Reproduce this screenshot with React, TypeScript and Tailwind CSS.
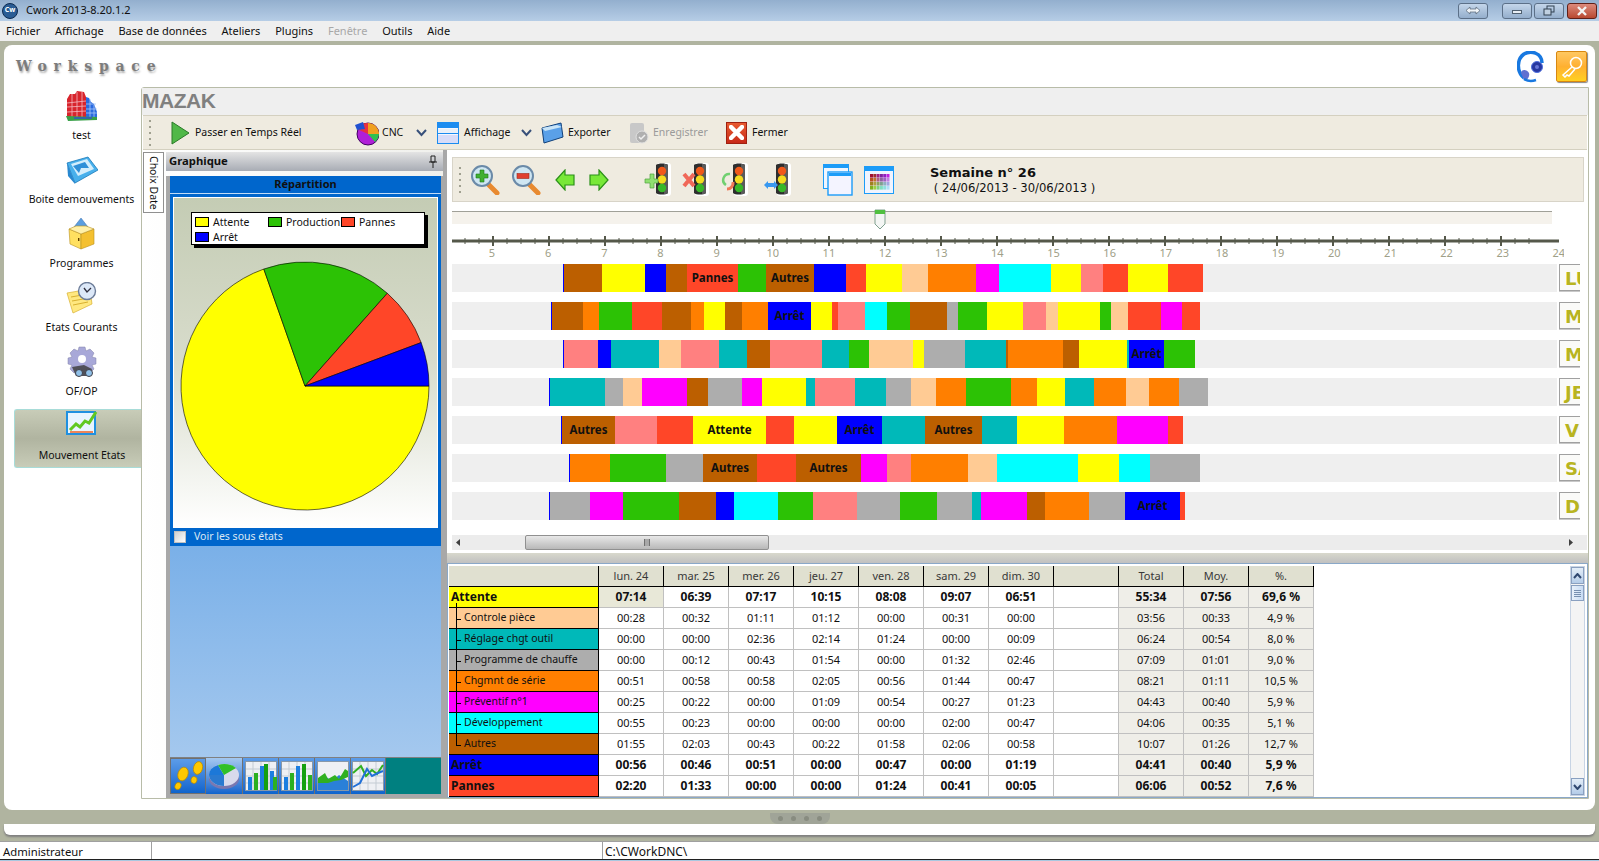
import React from "react";

const C: Record<string, string> = {
  y: "#ffff00", g: "#2cc205", r: "#ff4628", b: "#0000ff", w: "#bc5f00", p: "#ffcb94",
  t: "#00b9b9", a: "#adadad", o: "#ff7f00", m: "#ff00ff", c: "#00ffff", k: "#ff8080",
};

type Seg = [number, string, string?];
const ROWS: { start: number; label: string; segs: Seg[] }[] = [
  { start: 563, label: "LUNDI", segs: [[602, "w"], [645, "y"], [666, "b"], [687, "w"], [738, "r", "Pannes"], [766, "g"], [814, "w", "Autres"], [846, "b"], [866, "r"], [902, "y"], [928, "p"], [976, "o"], [999, "m"], [1051, "c"], [1081, "y"], [1103, "k"], [1128, "r"], [1168, "y"], [1203, "r"]] },
  { start: 551, label: "MARDI", segs: [[583, "w"], [599, "o"], [632, "g"], [662, "r"], [691, "w"], [704, "o"], [725, "y"], [742, "w"], [768, "o"], [811, "b", "Arrêt"], [832, "y"], [838, "r"], [865, "k"], [887, "c"], [910, "g"], [947, "w"], [958, "a"], [987, "g"], [1023, "y"], [1046, "k"], [1058, "p"], [1100, "y"], [1111, "g"], [1128, "p"], [1161, "r"], [1182, "m"], [1200, "r"]] },
  { start: 563, label: "MERCREDI", segs: [[598, "k"], [611, "b"], [659, "t"], [681, "p"], [719, "k"], [747, "t"], [770, "w"], [822, "k"], [849, "t"], [869, "g"], [913, "p"], [924, "y"], [965, "a"], [1006, "t"], [1008, "w"], [1063, "o"], [1079, "w"], [1127, "y"], [1129, "t"], [1164, "b", "Arrêt"], [1195, "g"]] },
  { start: 549, label: "JEUDI", segs: [[605, "t"], [623, "a"], [642, "p"], [687, "m"], [708, "w"], [742, "a"], [762, "m"], [806, "y"], [815, "t"], [855, "k"], [886, "t"], [911, "a"], [936, "p"], [966, "o"], [1011, "g"], [1037, "o"], [1065, "y"], [1094, "t"], [1126, "o"], [1149, "p"], [1179, "o"], [1208, "a"]] },
  { start: 561, label: "VENDREDI", segs: [[615, "w", "Autres"], [657, "k"], [693, "r"], [766, "y", "Attente"], [794, "r"], [837, "y"], [882, "b", "Arrêt"], [925, "t"], [982, "w", "Autres"], [1017, "t"], [1064, "y"], [1117, "o"], [1168, "m"], [1183, "r"]] },
  { start: 569, label: "SAMEDI", segs: [[610, "o"], [666, "g"], [703, "a"], [757, "w", "Autres"], [796, "r"], [861, "w", "Autres"], [887, "m"], [911, "k"], [968, "o"], [997, "p"], [1078, "c"], [1119, "y"], [1150, "c"], [1200, "a"]] },
  { start: 549, label: "DIMANCHE", segs: [[590, "a"], [623, "m"], [679, "g"], [716, "w"], [734, "b"], [778, "c"], [813, "g"], [857, "k"], [900, "a"], [937, "g"], [972, "a"], [981, "t"], [1027, "m"], [1045, "w"], [1089, "o"], [1125, "a"], [1180, "b", "Arrêt"], [1185, "r"]] },
];

const HEAD = ["lun. 24", "mar. 25", "mer. 26", "jeu. 27", "ven. 28", "sam. 29", "dim. 30", "", "Total", "Moy.", "%."];
const TABLE: { name: string; color: string; bold?: boolean; v: string[] }[] = [
  { name: "Attente", color: "y", bold: true, v: ["07:14", "06:39", "07:17", "10:15", "08:08", "09:07", "06:51", "", "55:34", "07:56", "69,6 %"] },
  { name: "Controle pièce", color: "p", v: ["00:28", "00:32", "01:11", "01:12", "00:00", "00:31", "00:00", "", "03:56", "00:33", "4,9 %"] },
  { name: "Réglage chgt outil", color: "t", v: ["00:00", "00:00", "02:36", "02:14", "01:24", "00:00", "00:09", "", "06:24", "00:54", "8,0 %"] },
  { name: "Programme de chauffe", color: "a", v: ["00:00", "00:12", "00:43", "01:54", "00:00", "01:32", "02:46", "", "07:09", "01:01", "9,0 %"] },
  { name: "Chgmnt de série", color: "o", v: ["00:51", "00:58", "00:58", "02:05", "00:56", "01:44", "00:47", "", "08:21", "01:11", "10,5 %"] },
  { name: "Préventif n°1", color: "m", v: ["00:25", "00:22", "00:00", "01:09", "00:54", "00:27", "01:23", "", "04:43", "00:40", "5,9 %"] },
  { name: "Développement", color: "c", v: ["00:55", "00:23", "00:00", "00:00", "00:00", "02:00", "00:47", "", "04:06", "00:35", "5,1 %"] },
  { name: "Autres", color: "w", v: ["01:55", "02:03", "00:43", "00:22", "01:58", "02:06", "00:58", "", "10:07", "01:26", "12,7 %"] },
  { name: "Arrêt", color: "b", bold: true, v: ["00:56", "00:46", "00:51", "00:00", "00:47", "00:00", "01:19", "", "04:41", "00:40", "5,9 %"] },
  { name: "Pannes", color: "r", bold: true, v: ["02:20", "01:33", "00:00", "00:00", "01:24", "00:41", "00:05", "", "06:06", "00:52", "7,6 %"] },
];

const Traffic = ({ children }: { children?: React.ReactNode }) => (
  <svg width="28" height="36" viewBox="0 0 28 36">
    <rect x="13" y="1" width="14" height="33" rx="3" fill="#fff" />
    <path d="M12 3 C14 1 22 1 24 3 V31 C22 33 14 33 12 31Z" fill="#2e2e2e" />
    <path d="M20 2 C22 2 23 2 24 3 V31 C23 32 22 32 20 32Z" fill="#5a5a5a" />
    <circle cx="18" cy="9" r="4.2" fill="#f0581a" />
    <circle cx="18" cy="17.5" r="4.2" fill="#f4dc20" />
    <circle cx="18" cy="26" r="4.2" fill="#38b828" />
    {children}
  </svg>
);

const Magnifier = ({ minus }: { minus?: boolean }) => (
  <svg width="30" height="31" viewBox="0 0 30 31">
    <path d="M17 19 L27 29" stroke="#e88a30" strokeWidth="5" strokeLinecap="round" />
    <circle cx="12" cy="12" r="10" fill="#cfe6f2" stroke="#6b8aa8" strokeWidth="2" />
    {minus ? <rect x="6" y="9.5" width="12" height="5" fill="#e04030" stroke="#a02818" strokeWidth=".6" /> : <path d="M6 10h4V6h4v4h4v4h-4v4h-4v-4H6z" fill="#40b030" stroke="#1f7a18" strokeWidth=".6" />}
  </svg>
);

const Arrow = ({ left }: { left?: boolean }) => (
  <svg width="20" height="22" viewBox="0 0 20 22">
    <path d={left ? "M1 11 L10 1 V6 H19 V16 H10 V21 Z" : "M19 11 L10 1 V6 H1 V16 H10 V21 Z"} fill="#78e838" stroke="#2a9018" strokeWidth="1.2" />
  </svg>
);

const WindowIcon = ({ w = 22, h = 22 }: { w?: number; h?: number }) => (
  <svg width={w} height={h} viewBox="0 0 22 22">
    <rect x=".5" y=".5" width="21" height="21" fill="#f4f7ff" stroke="#1c8cf0" />
    <rect x="1" y="1" width="20" height="5" fill="#1c8cf0" />
    <rect x="1" y="11" width="20" height="1" fill="#1c8cf0" />
    <rect x="1" y="7" width="20" height="4" fill="#eaf0f8" />
    <rect x="1" y="13" width="20" height="8" fill="#d8dcf8" />
  </svg>
);

const BarChartIcon = ({ alt }: { alt?: boolean }) => (
  <svg width="32" height="30" viewBox="0 0 32 30">
    <rect x=".5" y=".5" width="31" height="29" fill="#eef0f4" stroke="#8898a8" />
    <path d="M8 1V29M16 1V29M24 1V29M1 8H31M1 15H31M1 22H31" stroke="#c4ccd4" strokeWidth="1" />
    {(alt ? [[3, 16, "#1c7ee0"], [9, 12, "#2cb020"], [15, 5, "#1c7ee0"], [21, 3, "#14a010"], [27, 14, "#2cb020"]] : [[3, 16, "#1c7ee0"], [9, 12, "#2cb020"], [15, 5, "#1c7ee0"], [19, 3, "#14a010"], [25, 10, "#1c7ee0"], [28, 16, "#2cb020"]]).map((b, i) => (
      <rect key={i} x={b[0] as number} y={b[1] as number} width="4" height={29 - (b[1] as number)} fill={b[2] as string} />
    ))}
  </svg>
);

const TinyPie = () => (
  <svg width="32" height="28" viewBox="0 0 32 28">
    <ellipse cx="16" cy="17" rx="15" ry="10" fill="#7a78b0" />
    <ellipse cx="16" cy="13" rx="15" ry="11" fill="#d8daec" />
    <path d="M16 13 L1 13 A15 11 0 0 1 10 3 Z" fill="#1c78d8" />
    <path d="M16 13 L10 3 A15 11 0 0 1 28 6 Z" fill="#30c028" />
    <path d="M16 13 L1 13 A15 11 0 0 0 16 24 Z" fill="#2a7ad0" />
  </svg>
);

const Feet = () => (
  <svg width="34" height="30" viewBox="0 0 34 30">
    <g fill="#ffc800" stroke="#b88800" strokeWidth=".7">
      <ellipse cx="12" cy="13" rx="5" ry="7" transform="rotate(20 12 13)" />
      <ellipse cx="7" cy="25" rx="3" ry="3.6" transform="rotate(20 7 25)" />
      <ellipse cx="27" cy="7" rx="4.5" ry="6.5" transform="rotate(15 27 7)" />
      <ellipse cx="23" cy="19" rx="3" ry="3.4" transform="rotate(15 23 19)" />
    </g>
  </svg>
);

const SidebarIcon = ({ kind }: { kind: string }) => {
  if (kind === "test")
    return (
      <svg width="32" height="30" viewBox="0 0 32 30">
        <path d="M1 8 L4 3 L9 3 L11 0 L18 1 L20 6 V27 L1 26Z" fill="#d8242c" />
        <path d="M20 6 L23 7 L25 11 L28 13 L31 21 V27 L20 27Z" fill="#2a6ae0" />
        <path d="M1 12L20 10M1 16L20 15M1 21L20 20M6 3V26M11 1V26M16 1V27" stroke="#f4b8c0" strokeWidth=".8" />
        <path d="M20 13H30M20 18H31M20 22H31M24 8V27M28 14V27" stroke="#a8c8f8" strokeWidth=".8" />
        <path d="M0 25 L31 26 L31 29 L2 30Z" fill="#38a048" />
        <path d="M8 27H26" stroke="#3050d0" strokeWidth="1.4" />
      </svg>
    );
  if (kind === "box")
    return (
      <svg width="32" height="28" viewBox="0 0 32 28">
        <path d="M1 7 L22 1 L32 14 L9 27 Z" fill="#48b0ec" stroke="#1a78b8" strokeWidth=".8" />
        <path d="M5 8 L21 3 L28 13 L12 20Z" fill="#d4eefc" />
        <path d="M7 10 L19 6 L23 12 L15 12 L13 17Z" fill="#3090d8" />
        <path d="M1 7 L9 27 V28 L2 20Z" fill="#2888d0" />
      </svg>
    );
  if (kind === "prog")
    return (
      <svg width="27" height="32" viewBox="0 0 27 32">
        <path d="M13 0 L20 9 L13 15 L6 9Z" fill="#5a9ee0" stroke="#3a70b0" strokeWidth=".5" />
        <path d="M1 11 L13 16 V31 L2 26Z" fill="#ffe060" stroke="#b89020" strokeWidth=".6" />
        <path d="M13 16 L26 11 V26 L13 31Z" fill="#f4c030" stroke="#b89020" strokeWidth=".6" />
        <path d="M1 11 L8 8 L18 8 L26 11 L13 16Z" fill="#fff0a8" stroke="#b89020" strokeWidth=".6" />
        <rect x="10" y="20" width="1.4" height="3" fill="#604000" />
      </svg>
    );
  if (kind === "etat")
    return (
      <svg width="32" height="32" viewBox="0 0 32 32">
        <path d="M1 11 L24 7 L26 22 L7 31Z" fill="#ffe880" stroke="#d8b030" strokeWidth=".7" />
        <path d="M5 15L22 12M6 19L23 16M7 23L22 20" stroke="#d8b030" strokeWidth="1" />
        <circle cx="21" cy="9" r="8.5" fill="#dce8f8" stroke="#6c7c98" strokeWidth="1.4" />
        <path d="M18 6 L21 10 L25 6" stroke="#303040" strokeWidth="1.3" fill="none" />
      </svg>
    );
  if (kind === "of")
    return (
      <svg width="32" height="32" viewBox="0 0 32 32">
        <path d="M13 1h6l1 4 4-2 4 4-2 4 4 1v6l-4 1 2 4-4 4-4-2-1 4h-6l-1-4-4 2-4-4 2-4-4-1v-6l4-1-2-4 4-4 4 2z" fill="#a8a8d8" stroke="#8080a8" strokeWidth=".5" />
        <circle cx="16" cy="13" r="4" fill="#fff" />
        <path d="M6 21 L18 19 L26 23 L22 30 L10 30 Z" fill="#505058" />
        <circle cx="13" cy="27" r="3.5" fill="#90c0e8" stroke="#404048" />
        <circle cx="23" cy="27" r="3.5" fill="#90c0e8" stroke="#404048" />
      </svg>
    );
  return (
    <svg width="32" height="26" viewBox="0 0 32 26">
      <rect x="1" y="2" width="28" height="22" fill="#e8f4ff" stroke="#2090e0" strokeWidth="2" />
      <path d="M4 22H27" stroke="#f06020" strokeWidth="1.5" />
      <path d="M4 20 L10 14 L14 17 L19 11 L23 13 L30 2" stroke="#60c820" strokeWidth="3" fill="none" />
    </svg>
  );
};

function polar(deg: number) {
  const a = (deg * Math.PI) / 180;
  return `${125 + 124 * Math.cos(a)} ${125 + 124 * Math.sin(a)}`;
}
const slice = (a: number, b: number) => `M125 125 L${polar(a)} A124 124 0 ${b - a > 180 ? 1 : 0} 1 ${polar(b)} Z`;

const Chevron = () => (
  <svg width="11" height="8" viewBox="0 0 11 8"><path d="M1 1 L5.5 6 L10 1" stroke="#38507a" strokeWidth="2" fill="none" /></svg>
);

const Grip = () => (
  <div className="flex flex-col gap-[4px] w-[2px]">
    {[0, 1, 2, 3, 4].map((i) => <div key={i} className="w-[2px] h-[2px] bg-[#a0a090]" />)}
  </div>
);

const TitleBtn = ({ children, cls, w = "w-[30px]" }: { children: React.ReactNode; cls: string; w?: string }) => (
  <div className={`${w} h-[16px] rounded-[3px] border border-[#5c7088] flex items-center justify-center ${cls}`}>{children}</div>
);

const MENU = ["Fichier", "Affichage", "Base de données", "Ateliers", "Plugins", "Fenêtre", "Outils", "Aide"];
const SIDE: [string, string][] = [["test", "test"], ["box", "Boite demouvements"], ["prog", "Programmes"], ["etat", "Etats Courants"], ["of", "OF/OP"]];
const GRID = ["#a01030", "#a03030", "#a02080", "#8020a0", "#9020c0", "#c020e0", "#b85020", "#c07030", "#b06080", "#9060a0", "#a060c0", "#c080e0", "#a08020", "#b0a040", "#90a060", "#80a090", "#90b0c0", "#a0a8e0", "#80b020", "#a0d040", "#80d080", "#80e0c0", "#90e0e0", "#b0e0f8"];

const TREE_TOPS = ["top-[53px]", "top-[74px]", "top-[95px]", "top-[116px]", "top-[137px]", "top-[158px]", "top-[179px]"];

export default function App() {
  return (
    <div className="w-[1599px] h-[861px] flex flex-col overflow-hidden bg-[#b0b4a0] font-['Noto_Sans',sans-serif] text-[10.5px] text-[#101010]">
      {/* title bar */}
      <div className="h-[21px] flex items-center bg-gradient-to-b from-[#93afce] to-[#b6cde6] shrink-0">
        <div className="ml-[2px] w-[16px] h-[16px] rounded-full bg-[#2a5c94] border border-[#0c2a50] flex items-center justify-center text-[7px] font-bold text-white">Cw</div>
        <span className="ml-[8px] text-[11px]">Cwork 2013-8.20.1.2</span>
        <div className="ml-auto flex items-center">
          <TitleBtn cls="bg-gradient-to-b from-[#c4d6ea] to-[#94aecc]">
            <svg width="16" height="9" viewBox="0 0 16 9"><path d="M1 4.5 L5 1 V3 H11 V1 L15 4.5 L11 8 V6 H5 V8 Z" fill="#f0f4f8" stroke="#506070" strokeWidth=".7" /></svg>
          </TitleBtn>
          <div className="w-[14px]" />
          <TitleBtn cls="bg-gradient-to-b from-[#c4d6ea] to-[#94aecc]"><div className="w-[10px] h-[4px] bg-[#e8eef4] border border-[#506070] mt-[3px]" /></TitleBtn>
          <div className="w-[2px]" />
          <TitleBtn cls="bg-gradient-to-b from-[#c4d6ea] to-[#94aecc]">
            <svg width="12" height="11" viewBox="0 0 12 11"><rect x="4" y="1" width="7" height="6" fill="none" stroke="#304050" /><rect x="1" y="4" width="7" height="6" fill="#c0d0e0" stroke="#304050" /></svg>
          </TitleBtn>
          <div className="w-[3px]" />
          <TitleBtn cls="bg-gradient-to-b from-[#dc8a7c] to-[#b84830] border-[#602018]">
            <svg width="12" height="10" viewBox="0 0 12 10"><path d="M2 1 L10 9 M10 1 L2 9" stroke="#f4f4f4" strokeWidth="2.4" /></svg>
          </TitleBtn>
          <div className="w-[2px]" />
        </div>
      </div>
      {/* menu */}
      <div className="h-[20px] flex items-center bg-[#efefef] pl-[6px] gap-[14.8px] text-[11px] shrink-0">
        {MENU.map((m) => <span key={m} className={m === "Fenêtre" ? "text-[#a8a8a8]" : ""}>{m}</span>)}
      </div>
      {/* workspace card */}
      <div className="h-[769px] pt-[4px] pl-[4px] pr-[4px] shrink-0">
        <div className="h-[765px] bg-white rounded-[8px] flex flex-col">
          <div className="h-[42px] flex items-start shrink-0">
            <span className="ml-[12px] mt-[11px] text-[14px] leading-[20px] font-bold font-['DejaVu_Serif',serif] tracking-[6.8px] text-[#7c7c7c] [text-shadow:1px_2px_2px_#b0b0b0]">Workspace</span>
            <div className="ml-auto mt-[6px] mr-[8px] flex items-start gap-[12px]">
              <svg width="27" height="32" viewBox="0 0 27 32">
                <path d="M7 27 C-1 20 0 8 7 3 C14 -1 25 2 25 12" stroke="#1878e0" strokeWidth="3.5" fill="none" />
                <circle cx="20" cy="16" r="5.5" fill="#2838a0" stroke="#5070e0" />
                <circle cx="20" cy="16" r="2" fill="#6878d8" />
                <path d="M4 22 C4 18 10 18 12 22 C13 26 10 30 7 29Z" fill="#6070d0" />
                <path d="M7 28 C12 31 16 30 19 29" stroke="#1878e0" strokeWidth="2.5" fill="none" />
              </svg>
              <div className="w-[31px] h-[31px] rounded-[2px] border border-[#d88810] bg-gradient-to-b from-[#ffc860] via-[#ffb030] to-[#ffd020] shadow-[1px_1px_1px_#888] flex items-center justify-center">
                <svg width="24" height="22" viewBox="0 0 24 22"><circle cx="16" cy="7" r="5.5" fill="none" stroke="#fff" strokeWidth="1.5" /><path d="M12 11 L3 19 L5 21 L7 19 L9 20 L15 13" fill="none" stroke="#fff" strokeWidth="1.5" /></svg>
              </div>
            </div>
          </div>
          <div className="flex flex-1 min-h-0 pb-[11px] pr-[6px]">
            {/* sidebar */}
            <div className="w-[137px] shrink-0 flex flex-col pl-[10px]">
              {SIDE.map(([k, l]) => (
                <div key={k} className="h-[64px] flex flex-col items-center pl-[8px]">
                  <div className="h-[40px] flex items-center mt-[-1px]"><SidebarIcon kind={k} /></div>
                  <span className="mt-[1px] leading-[16px] whitespace-nowrap">{l}</span>
                </div>
              ))}
              <div className="h-[59px] mt-[2px] rounded-l-[3px] flex flex-col items-center pl-[8px] border-y border-l border-[#a8dcd8] bg-gradient-to-b from-[#c8ccb8] via-[#b0b4a0] to-[#c8ccb8]">
                <div className="h-[27px]"><SidebarIcon kind="mv" /></div>
                <span className="mt-[10px] leading-[16px] whitespace-nowrap">Mouvement Etats</span>
              </div>
            </div>
            {/* Mazak panel */}
            <div className="flex-1 min-w-0 flex flex-col border border-[#b8bca8] rounded-tl-[3px]">
              <div className="h-[27px] bg-[#efefef] flex items-center pb-[2px] shrink-0 text-[21px] font-bold font-['Liberation_Sans',sans-serif] text-[#808080] tracking-[-0.5px]">MAZAK</div>
              <div className="h-[35px] mx-[1px] bg-[#efebe0] border-y border-[#d4d0c0] flex items-center shrink-0">
                <div className="ml-[6px]"><Grip /></div>
                <svg className="ml-[20px]" width="19" height="24" viewBox="0 0 19 24"><path d="M1 1 L18 12 L1 23Z" fill="#50b848" stroke="#2a7a28" /></svg>
                <span className="ml-[5px] w-[160px]">Passer en Temps Réel</span>
                <svg width="24" height="26" viewBox="0 0 24 26">
                  <circle cx="13" cy="14" r="11" fill="#b020d8" stroke="#400060" />
                  <path d="M13 14 L13 3 A11 11 0 0 1 24 14Z" fill="#f0a020" />
                  <path d="M13 14 L24 14 A11 11 0 0 1 20 22Z" fill="#30c050" />
                  <path d="M13 14 L2 9 A11 11 0 0 1 13 3Z" fill="#e83040" />
                  <path d="M0 5 L8 2 L10 9 L2 10Z" fill="#2050d0" />
                </svg>
                <span className="ml-[3px] w-[34px]">CNC</span>
                <Chevron />
                <div className="ml-[10px]"><WindowIcon /></div>
                <span className="ml-[5px] w-[57px]">Affichage</span>
                <Chevron />
                <svg className="ml-[9px]" width="23" height="22" viewBox="0 0 23 22"><path d="M1 6 L20 1 L22 15 L3 21Z" fill="#5aa0e8" stroke="#10407a" /><path d="M1 6 L16 3 L21 5 L4 9Z" fill="#c8e4f8" /></svg>
                <span className="ml-[4px] w-[60px]">Exporter</span>
                <svg width="21" height="22" viewBox="0 0 21 22"><rect x="2" y="1" width="14" height="20" rx="2" fill="#c8c8c8" /><circle cx="14" cy="15" r="6" fill="#b0b0b0" stroke="#e0e0e0" /><path d="M11 15 L13 17 L17 13" stroke="#f0f0f0" strokeWidth="1.5" fill="none" /></svg>
                <span className="ml-[4px] w-[73px] text-[#9a9a9a]">Enregistrer</span>
                <div className="w-[21px] h-[22px] bg-gradient-to-b from-[#e85a30] to-[#c82818] border border-[#a02010] flex items-center justify-center">
                  <svg width="15" height="15" viewBox="0 0 15 15"><path d="M2 2 L13 13 M13 2 L2 13" stroke="#fff" strokeWidth="4.5" strokeLinecap="round" /></svg>
                </div>
                <span className="ml-[5px]">Fermer</span>
              </div>
              <div className="flex-1 min-h-0 flex">
                {/* left */}
                <div className="w-[301px] shrink-0 flex bg-gradient-to-r from-white to-[#f0f0ec]">
                  <div className="w-[21px] h-[61px] mt-[2px] ml-[1px] bg-white border border-[#909090] flex items-center justify-center shrink-0">
                    <span className="[writing-mode:vertical-rl] whitespace-nowrap">Choix Date</span>
                  </div>
                  <div className="ml-[2px] flex-1 min-w-0 flex flex-col pt-[2px]">
                    <div className="h-[19px] shrink-0 bg-gradient-to-b from-[#e4e4e4] to-[#a8acb4] flex items-center justify-between pl-[3px] pr-[5px] text-[11.3px] font-bold">
                      <span>Graphique</span>
                      <svg width="10" height="13" viewBox="0 0 10 13"><path d="M3 1H7V7H3ZM1 7H9M5 7V13" stroke="#202020" fill="none" /></svg>
                    </div>
                    <div className="flex-1 mt-[5px] min-h-0 flex flex-col border-l-[4px] border-r-[2px] border-b-[4px] border-[#a8a8a8] bg-[#98c0ec]">
                      <div className="h-[18px] shrink-0 bg-[#0066cc] border-b border-[#c0dcf8] flex items-center justify-center font-bold text-[11px]">Répartition</div>
                      <div className="h-[334px] shrink-0 border-x-[3px] border-t-[3px] border-[#0066cc]">
                        <div className="h-[331px] border border-white bg-gradient-to-b from-[#c4ccb4] via-[#d8dccc] to-white flex flex-col">
                          <div className="ml-[17px] mt-[14px] w-[234px] h-[33px] shrink-0 bg-white border border-black shadow-[3px_3px_0_#000] grid grid-cols-[73px_73px_1fr] grid-rows-2 pl-[3px] pt-[1px] leading-[14px]">
                            {([["Attente", "y"], ["Production", "g"], ["Pannes", "r"], ["Arrêt", "b"]] as const).map(([t, c]) => (
                              <div key={t} className="flex items-center">
                                <div className="w-[14px] h-[10px] border border-black mr-[4px]" style={{ backgroundColor: C[c] }} />
                                {t}
                              </div>
                            ))}
                          </div>
                          <svg className="ml-[6px] mt-[16px] shrink-0" width="250" height="250" viewBox="0 0 250 250">
                            <path d={slice(0, 250.6)} fill={C.y} stroke="#000" strokeWidth=".6" />
                            <path d={slice(250.6, 311.6)} fill={C.g} stroke="#000" strokeWidth=".6" />
                            <path d={slice(311.6, 339.5)} fill={C.r} stroke="#000" strokeWidth=".6" />
                            <path d={slice(339.5, 360)} fill={C.b} stroke="#000" strokeWidth=".6" />
                          </svg>
                        </div>
                      </div>
                      <div className="h-[18px] shrink-0 bg-[#0066cc] flex items-center pl-[4px] text-[#dce8f4]">
                        <div className="w-[12px] h-[12px] bg-gradient-to-br from-[#d0d0d0] to-white border border-[#c0c0c0] mr-[8px]" />
                        Voir les sous états
                      </div>
                      <div className="flex-1 min-h-0 bg-gradient-to-b from-[#7ab0e8] to-[#a4c8ee]" />
                      <div className="h-[37px] shrink-0 bg-[#008080] border-t border-[#808080] flex">
                        <div className="w-[36px] border border-[#707070] bg-gradient-to-b from-[#5c9ce8] to-[#0d64cc] flex items-center justify-center"><Feet /></div>
                        <div className="w-[36px] bg-gradient-to-b from-[#a4c8f0] to-[#0d64cc] flex items-center justify-center"><TinyPie /></div>
                        {[0, 1].map((i) => <div key={i} className="w-[36px] border-l border-[#707070] bg-gradient-to-b from-[#5c9ce8] to-[#0d64cc] flex items-center justify-center"><BarChartIcon alt={i === 1} /></div>)}
                        <div className="w-[36px] border-l border-[#707070] bg-gradient-to-b from-[#5c9ce8] to-[#0d64cc] flex items-center justify-center">
                          <svg width="32" height="30" viewBox="0 0 32 30"><rect x=".5" y=".5" width="31" height="29" fill="#eef0f4" stroke="#8898a8" /><path d="M1 29V18L8 15L15 20L22 14L31 20V29Z" fill="#2a80d8" /><path d="M1 17L8 12L11 18L18 14L22 18L28 8L31 10V16L24 19L17 20L11 22L1 22Z" fill="#30b020" /></svg>
                        </div>
                        <div className="w-[36px] border-x border-[#707070] bg-gradient-to-b from-[#5c9ce8] to-[#0d64cc] flex items-center justify-center">
                          <svg width="32" height="30" viewBox="0 0 32 30"><rect x=".5" y=".5" width="31" height="29" fill="#eef0f4" stroke="#8898a8" /><path d="M8 1V29M16 1V29M24 1V29M1 8H31M1 15H31M1 22H31" stroke="#c4ccd4" /><path d="M1 12L9 5L14 15L20 9L25 13L31 4" stroke="#30b020" strokeWidth="2" fill="none" /><path d="M1 26L8 22L15 8L20 15L26 12L31 10" stroke="#2070d8" strokeWidth="2" fill="none" /></svg>
                        </div>
                      </div>
                    </div>
                  </div>
                </div>
                <div className="w-[4px] bg-[#a8a8a8] shrink-0" />
                {/* right */}
                <div className="flex-1 min-w-0 flex flex-col">
                  <div className="h-[403px] shrink-0 bg-white pt-[7px] pl-[5px] pr-[1px] flex flex-col">
                    <div className="h-[45px] w-[1132px] shrink-0 bg-[#efebe0] border border-[#d8d4c8] flex items-center">
                      <div className="ml-[6px]"><Grip /></div>
                      <div className="ml-[9px]"><Magnifier /></div>
                      <div className="ml-[11px]"><Magnifier minus /></div>
                      <div className="ml-[14px]"><Arrow left /></div>
                      <div className="ml-[14px]"><Arrow /></div>
                      <div className="ml-[35px]">
                        <Traffic><path d="M1 17h5v-5h4v5h4v4h-4v5H6v-5H1z" fill="#90e070" stroke="#50a040" strokeWidth=".7" /></Traffic>
                      </div>
                      <div className="ml-[10px]">
                        <Traffic><path d="M2 12 L12 24 M12 12 L2 24" stroke="#f06858" strokeWidth="4" /></Traffic>
                      </div>
                      <div className="ml-[11px]">
                        <Traffic><path d="M9 12 A6 6 0 0 0 5 23" stroke="#70d070" strokeWidth="2.5" fill="none" /><path d="M6 27 A6 6 0 0 0 12 20" stroke="#f07858" strokeWidth="3" fill="none" /></Traffic>
                      </div>
                      <div className="ml-[15px]">
                        <Traffic><path d="M0 23 L4 19 V21 H10 V19 L14 23 L10 27 V25 H4 V27Z" fill="#3898f0" /></Traffic>
                      </div>
                      <div className="ml-[31px]">
                        <svg width="30" height="32" viewBox="0 0 30 32"><rect x=".5" y=".5" width="25" height="24" fill="#f0f6ff" stroke="#1c9cf8" /><rect x="1" y="1" width="24" height="3" fill="#1c9cf8" /><rect x="5" y="8" width="24" height="23" fill="#f4f4ff" stroke="#1c9cf8" strokeWidth="1.4" /><rect x="6" y="9" width="22" height="3" fill="#1c9cf8" /></svg>
                      </div>
                      <div className="ml-[11px]">
                        <svg width="30" height="28" viewBox="0 0 30 28"><rect x=".5" y=".5" width="29" height="27" fill="#f0f4ff" stroke="#1c9cf8" /><rect x="1" y="1" width="28" height="4" fill="#1c9cf8" />{GRID.map((c, i) => <rect key={i} x={6 + (i % 6) * 3.3} y={8 + Math.floor(i / 6) * 4} width="3" height="3.6" fill={c} />)}</svg>
                      </div>
                      <div className="ml-[36px] flex flex-col font-['DejaVu_Sans',sans-serif]">
                        <span className="text-[13px] leading-[16px] font-bold">Semaine n° 26</span>
                        <span className="text-[11.6px] leading-[14px] whitespace-pre"> ( 24/06/2013 - 30/06/2013 )</span>
                      </div>
                    </div>
                    <div className="relative h-[13px] mt-[9px] w-[1100px] shrink-0 bg-[#f5f2ec] border-t border-[#a0a098]">
                      <svg className="absolute left-[422px] top-[-3px]" width="12" height="21" viewBox="0 0 12 21"><path d="M1 1H11V15L6 20L1 15Z" fill="#f4f6f4" stroke="#80a090" /><rect x="1" y="1" width="10" height="4" fill="#50c040" /></svg>
                    </div>
                    <svg className="shrink-0 mt-[3px]" width="1112" height="37" viewBox="0 0 1112 37">
                      <rect x="0" y="12.5" width="1107" height="3" fill="#55584a" />
                      {Array.from({ length: 77 }).map((_, i) => {
                        const x = 41 + (i - 2) * 14;
                        if (x < 0 || x > 1106) return null;
                        const major = (i - 2) % 4 === 0;
                        return <rect key={i} x={x - (major ? 1 : 0.5)} y={major ? 9 : 11} width={major ? 2 : 1} height={major ? 10 : 6} fill="#55584a" />;
                      })}
                      {Array.from({ length: 20 }).map((_, i) => (
                        <text key={i} x={40 + i * 56.15} y="29.5" textAnchor="middle" fontSize="11" fill="#a0a088">{i + 5}</text>
                      ))}
                    </svg>
                    <div className="flex flex-col gap-[10px] shrink-0">
                      {ROWS.map((r) => {
                        let prev = r.start + 1;
                        return (
                          <div key={r.label} className="h-[28px] flex shrink-0">
                            <div className="w-[1105px] flex bg-[#efefef] shrink-0">
                              <div className="shrink-0" style={{ width: r.start - 452 }} />
                              <div className="w-[1px] bg-[#0000ff] shrink-0" />
                              {r.segs.map(([end, c, label], i) => {
                                const w = end - prev;
                                prev = end;
                                return (
                                  <div key={i} className="shrink-0 flex items-center justify-center font-bold text-[11.5px] overflow-hidden" style={{ width: w, backgroundColor: C[c] }}>
                                    {label}
                                  </div>
                                );
                              })}
                            </div>
                            <div className="ml-[2px] w-[21px] h-[27px] border border-r-0 border-[#a0a0a0] shadow-[0_1px_0_#c8c8c8] bg-[#fafaf8] overflow-hidden pl-[5px] text-[18px] leading-[27px] font-bold text-[#b8b420] font-['DejaVu_Sans',sans-serif] whitespace-nowrap">{r.label}</div>
                          </div>
                        );
                      })}
                    </div>
                    <div className="h-[15px] mt-[15px] shrink-0 bg-[#ececec] flex items-center">
                      <svg className="ml-[4px]" width="4" height="7" viewBox="0 0 4 7"><path d="M4 0V7L0 3.5Z" fill="#404040" /></svg>
                      <div className="ml-[65px] w-[244px] h-[15px] rounded-[2px] border border-[#909090] bg-gradient-to-b from-[#e8e8e8] via-[#d0d0d0] to-[#b8b8b8] flex items-center justify-center">
                        <div className="w-[6px] h-[7px] border-x border-[#707070] bg-[#a8a8a8]" />
                      </div>
                      <svg className="ml-auto mr-[14px]" width="4" height="7" viewBox="0 0 4 7"><path d="M0 0V7L4 3.5Z" fill="#404040" /></svg>
                    </div>
                  </div>
                  <div className="h-[10px] shrink-0 bg-gradient-to-b from-[#d8d8cc] to-[#c0c0c0]" />
                  {/* table panel */}
                  <div className="flex-1 min-h-0 flex bg-white border-t border-x border-b border-[#8aa8c8] pl-[1px] pr-[1px] pt-[2px]">
                    <div className="flex-1 min-w-0 flex flex-col relative">
                      <div className="h-[21px] flex shrink-0">
                        <div className="w-[150px] h-full bg-[#e0e0d0] border-b border-r border-black shrink-0" />
                        {HEAD.map((h, i) => (
                          <div key={i} className="w-[65px] h-full shrink-0 bg-[#e0e0d0] border-b border-r border-black flex items-center justify-center text-[11px] text-[#383838]">{h}</div>
                        ))}
                      </div>
                      {TABLE.map((row, ri) => (
                        <div key={row.name} className={`h-[21px] flex shrink-0 ${row.bold ? "font-bold" : ""}`}>
                          <div className={`w-[150px] shrink-0 h-full border-b border-r border-black flex items-center ${row.bold ? "pl-[2px] text-[12px]" : "pl-[15px]"}`} style={{ backgroundColor: C[row.color] }}>{row.name}</div>
                          {row.v.map((v, i) => (
                            <div key={i} className={`w-[65px] h-full shrink-0 border-b border-r border-[#c0c0c0] flex items-center justify-center ${row.bold ? "text-[12px]" : "text-[11px]"} ${i >= 8 ? "bg-[#efeee8]" : ri === 0 && i === 0 ? "bg-[#e8e8d8]" : "bg-white"}`}>{v}</div>
                          ))}
                        </div>
                      ))}
                      {/* tree lines */}
                      <div className="absolute left-[7px] top-[37px] w-[1px] h-[143px] bg-black" />
                      {TREE_TOPS.map((t) => (
                        <div key={t} className={`absolute left-[8px] ${t} w-[4px] h-[1px] bg-black`} />
                      ))}
                    </div>
                    <div className="w-[15px] shrink-0 mr-[1px] flex flex-col bg-[#f4f4f4] border border-[#c8d4e4] mb-[1px]">
                      <div className="h-[17px] bg-gradient-to-b from-[#e4eef8] to-[#b4cce8] border border-[#8aa0c0] flex items-center justify-center"><svg width="9" height="6" viewBox="0 0 9 6"><path d="M1 5 L4.5 1 L8 5" stroke="#304870" strokeWidth="2" fill="none" /></svg></div>
                      <div className="h-[16px] mt-[1px] bg-gradient-to-r from-[#e8f0fa] to-[#c8dcf4] border border-[#8aa0c0] flex flex-col items-center justify-center gap-[1px]">
                        {[0, 1, 2, 3].map((i) => <div key={i} className="w-[7px] h-[1px] bg-[#7890b0]" />)}
                      </div>
                      <div className="mt-auto h-[17px] bg-gradient-to-b from-[#e4eef8] to-[#b4cce8] border border-[#8aa0c0] flex items-center justify-center"><svg width="9" height="6" viewBox="0 0 9 6"><path d="M1 1 L4.5 5 L8 1" stroke="#304870" strokeWidth="2" fill="none" /></svg></div>
                    </div>
                  </div>
                </div>
              </div>
            </div>
          </div>
        </div>
      </div>
      {/* splitter */}
      <div className="h-[14px] shrink-0 flex justify-center">
        <div className="w-[60px] h-[11px] mt-[3px] rounded-b-[8px] bg-[#a0a498] flex items-center justify-center gap-[8px]">
          {[0, 1, 2, 3].map((i) => <div key={i} className="w-[5px] h-[5px] rounded-full bg-[#888c80]" />)}
        </div>
      </div>
      {/* lower white strip */}
      <div className="h-[11px] mx-[4px] bg-white rounded-b-[6px] shrink-0 shadow-[0_2px_2px_#808080]" />
      {/* status */}
      <div className="mt-[6px] h-[19px] shrink-0 bg-white border-t border-[#a0a0a0] flex border-b border-b-[#202020] leading-[16px]">
        <div className="w-[152px] border-r border-[#a0a0a0] pl-[3px] pt-[2px] text-[11.3px] whitespace-nowrap">Administrateur</div>
        <div className="w-[451px] border-r border-[#a0a0a0]" />
        <div className="flex-1 pl-[2px] pt-[2px] text-[12px]">C:\CWorkDNC\</div>
      </div>
      <div className="flex-1 bg-[#a8c8e0]" />
    </div>
  );
}
